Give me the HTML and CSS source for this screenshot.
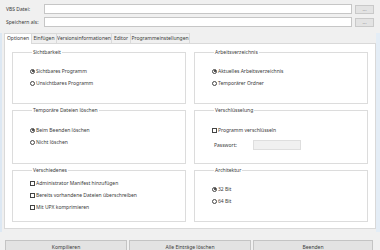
FILE: index.html
```html
<!DOCTYPE html>
<html lang="de">
<head>
  <meta charset="UTF-8">
  <title>VBS Compiler</title>
  <link rel="stylesheet" href="styles.css">
</head>
<body>

  <div class="top">
    <div class="file-row">
      <span class="file-label">VBS Datei:</span>
      <input class="file-input" type="text">
      <button class="browse">...</button>
    </div>
    <div class="file-row">
      <span class="file-label">Speichern als:</span>
      <input class="file-input" type="text">
      <button class="browse">...</button>
    </div>
  </div>

  <div class="tab-area">
    <div class="tabs">
      <div class="tab active t-opt">Optionen</div>
      <div class="tab t-ein">Einfügen</div>
      <div class="tab t-ver">Versionsinformationen</div>
      <div class="tab t-edi">Editor</div>
      <div class="tab t-pro">Programmeinstellungen</div>
    </div>

    <div class="panel">
      <div class="groups">
        <fieldset class="group pad-10">
          <legend>Sichtbarkeit</legend>
          <div class="opt"><span class="radio on"></span>Sichtbares Programm</div>
          <div class="opt"><span class="radio"></span>Unsichtbares Programm</div>
        </fieldset>

        <fieldset class="group pad-10">
          <legend>Arbeitsverzeichnis</legend>
          <div class="opt"><span class="radio on"></span>Aktuelles Arbeitsverzeichnis</div>
          <div class="opt"><span class="radio"></span>Temporärer Ordner</div>
        </fieldset>

        <fieldset class="group pad-11">
          <legend>Temporäre Dateien löschen</legend>
          <div class="opt"><span class="radio on"></span>Beim Beenden löschen</div>
          <div class="opt"><span class="radio"></span>Nicht löschen</div>
        </fieldset>

        <fieldset class="group pad-11">
          <legend>Verschlüsselung</legend>
          <div class="opt"><span class="check"></span>Programm verschlüsseln</div>
          <div class="pass-row">
            <span class="pass-label">Passwort:</span>
            <input class="pass-input" type="password" disabled>
          </div>
        </fieldset>

        <fieldset class="group pad-4">
          <legend>Verschiedenes</legend>
          <div class="opt"><span class="check"></span>Administrator Manifest hinzufügen</div>
          <div class="opt"><span class="check"></span>Bereits vorhandene Dateien überschreiben</div>
          <div class="opt"><span class="check"></span>Mit UPX komprimieren</div>
        </fieldset>

        <fieldset class="group pad-10">
          <legend>Architektur</legend>
          <div class="opt"><span class="radio on"></span>32 Bit</div>
          <div class="opt"><span class="radio"></span>64 Bit</div>
        </fieldset>
      </div>
    </div>
  </div>

  <div class="actions">
    <button class="action">Kompilieren</button>
    <button class="action">Alle Einträge löschen</button>
    <button class="action last">Beenden</button>
  </div>

</body>
</html>
```

FILE: styles.css
```css
* {
  box-sizing: border-box;
}

html {
  overflow: hidden;
}

body {
  margin: 0;
  width: 380px;
  height: 250px;
  overflow: hidden;
  background-color: #f0f0f0;
  font-family: "Noto Sans", "Open Sans", sans-serif;
  font-size: 5px;
  color: #3a3a3a;
}

.top {
  padding: 4px 6px 0 6px;
  display: flex;
  flex-direction: column;
  gap: 3px;
}

.file-row {
  display: flex;
  align-items: center;
  height: 10px;
}

.file-label {
  width: 38px;
}

.file-input {
  width: 308px;
  height: 10px;
  margin: 0;
  padding: 0;
  border: 1px solid #c6c6c6;
  background-color: #fff;
}

.browse {
  margin-left: 3px;
  width: 19px;
  height: 9px;
  padding: 0;
  border: 1px solid #c9c9c9;
  background-color: #e3e3e3;
  font-family: inherit;
  font-size: 5px;
  line-height: 5px;
  color: #888;
}

.tab-area {
  margin-top: 6px;
  padding: 0 0 3px 2px;
  border-left: 2px solid #dde8f3;
  border-right: 4px solid #e4edf6;
}

.tabs {
  display: flex;
  height: 10px;
  align-items: flex-start;
}

.tab {
  height: 10px;
  line-height: 9px;
  margin-left: -1px;
  border: 1px solid #dadada;
  border-bottom: none;
  text-align: center;
  white-space: nowrap;
  overflow: hidden;
}

.tab.active {
  margin-left: 0;
  height: 11px;
  background-color: #fff;
  position: relative;
  z-index: 1;
}

.t-opt { width: 28px; }
.t-ein { width: 26px; }
.t-ver { width: 56px; }
.t-edi { width: 20px; }
.t-pro { width: 60px; }

.panel {
  height: 186px;
  background-color: #fff;
  border: 1px solid #d9d9d9;
  padding: 5px 7px 0 7px;
}

.groups {
  display: grid;
  grid-template-columns: 174px 174px;
  grid-template-rows: 55px 57px 55px;
  column-gap: 8px;
  row-gap: 3px;
}

.group {
  margin: 0;
  padding: 0 0 0 17px;
  min-width: 0;
  border: 1px solid #dcdcdc;
}

.group legend {
  margin-left: 2px;
  padding: 0 1px;
  height: 6px;
  line-height: 6px;
}

.pad-4 { padding-top: 4px; }
.pad-10 { padding-top: 10px; }
.pad-11 { padding-top: 11px; }

.opt {
  display: flex;
  align-items: center;
  gap: 1px;
  height: 12px;
  white-space: nowrap;
}

.radio {
  width: 5px;
  height: 5px;
  border: 1px solid #444;
  border-radius: 50%;
  display: flex;
  align-items: center;
  justify-content: center;
}

.radio.on::after {
  content: '';
  width: 2px;
  height: 2px;
  border-radius: 50%;
  background-color: #222;
}

.check {
  width: 5px;
  height: 5px;
  border: 1px solid #444;
  background-color: #fff;
}

.pass-row {
  display: flex;
  align-items: center;
  margin-top: 4px;
  height: 10px;
}

.pass-label {
  margin-left: 2px;
  width: 39px;
}

.pass-input {
  width: 48px;
  height: 10px;
  margin: 0;
  padding: 0;
  border: 1px solid #dedede;
  background-color: #f0f0f0;
}

.actions {
  display: flex;
  gap: 2px;
  padding: 0 5px;
  margin-top: 8px;
  height: 10px;
  align-items: flex-start;
}

.action {
  flex: none;
  width: 122px;
  height: 10px;
  padding: 3px 0 0 0;
  border: 1px solid #c4c4c4;
  border-bottom: none;
  background-color: #e3e3e3;
  font-family: inherit;
  font-size: 5px;
  line-height: 5px;
  color: #3a3a3a;
}

.action.last {
  width: 120px;
}
```
